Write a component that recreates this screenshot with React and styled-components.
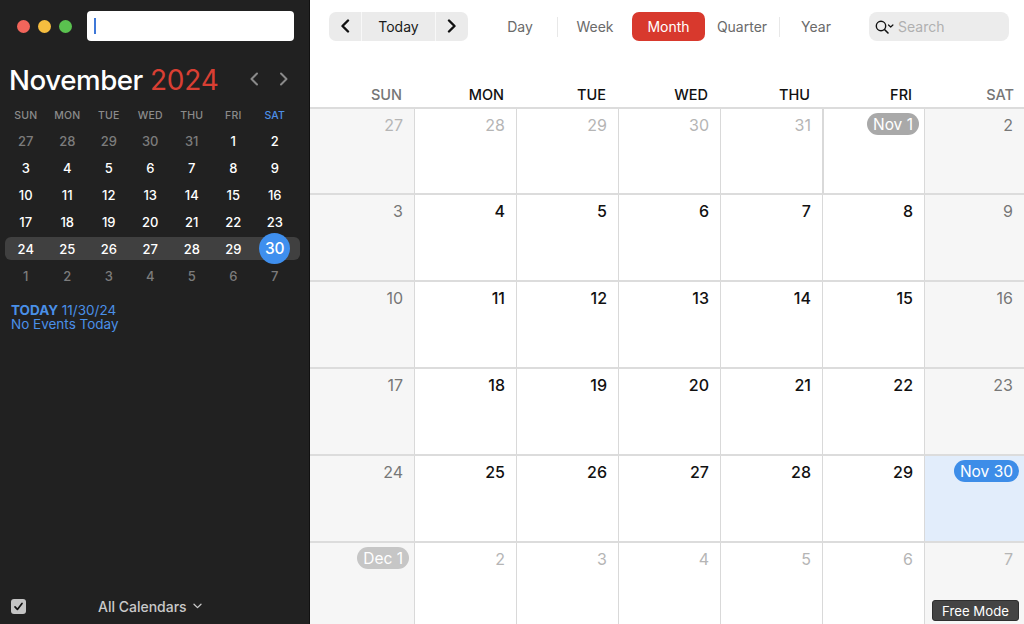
import React from 'react'
import styled, { createGlobalStyle } from 'styled-components'

const Global = createGlobalStyle`
  html, body { margin: 0; padding: 0; background: #fff; }
  body { font-family: Inter, "Liberation Sans", sans-serif; overflow: hidden; }
`

const Page = styled.div`
  display: flex;
  width: 1024px;
  height: 624px;
  overflow: hidden;
  position: relative;
`

const Sidebar = styled.aside`
  width: 310px;
  height: 624px;
  flex: none;
  background: #212121;
  display: flex;
  flex-direction: column;
  box-sizing: border-box;
  border-right: 1px solid #111;
`

const TitleBar = styled.div`
  display: flex;
  align-items: center;
  height: 30px;
  margin-top: 11px;
  padding-left: 17px;
`

const Light = styled.span`
  width: 13px;
  height: 13px;
  border-radius: 50%;
  margin-right: 8px;
  background: ${p => p.$color};
`

const SearchField = styled.div`
  width: 207px;
  height: 30px;
  margin-left: 7px;
  background: #fff;
  border-radius: 4px;
  display: flex;
  align-items: center;
  padding-left: 7px;
  box-sizing: border-box;
`

const Caret = styled.span`
  width: 2px;
  height: 16px;
  background: #3f78d8;
`

const MonthRow = styled.div`
  display: flex;
  align-items: center;
  height: 36px;
  margin-top: 21px;
  padding-left: 9px;
`

const MonthName = styled.span`
  font-size: 27.7px;
  font-weight: 500;
  letter-spacing: -0.45px;
  color: #fff;
`

const YearName = styled.span`
  font-size: 28px;
  font-weight: 400;
  letter-spacing: -0.2px;
  color: #d93f33;
  margin-left: 7px;
`

const MonthNav = styled.div`
  display: flex;
  gap: 20px;
  margin-left: 30px;
  margin-bottom: 2px;
`

const MiniGrid = styled.div`
  display: grid;
  grid-template-columns: repeat(7, 41.5px);
  grid-template-rows: 25px repeat(6, 27px);
  margin: 4px 0 0 5px;
  position: relative;
`

const MiniHead = styled.div`
  display: flex;
  align-items: center;
  justify-content: center;
  padding-top: 2px;
  font-size: 10.5px;
  font-weight: 500;
  letter-spacing: 0.2px;
  color: ${p => (p.$blue ? '#4d8fe6' : '#8b8b8b')};
`

const MiniDay = styled.div`
  display: flex;
  align-items: center;
  justify-content: center;
  font-size: 13px;
  font-weight: 500;
  color: ${p => (p.$dim ? '#7c7c7c' : '#fff')};
  background: ${p => (p.$week ? '#404040' : 'transparent')};
  height: ${p => (p.$week ? '23px' : 'auto')};
  align-self: center;
  border-radius: ${p => (p.$first ? '6px 0 0 6px' : p.$last ? '0 6px 6px 0' : '0')};
  ${p => p.$last && 'margin-right: -4px; padding-right: 4px;'}
`

const TodayDot = styled.span`
  width: 31px;
  height: 31px;
  flex: none;
  border-radius: 50%;
  background: #3f8fee;
  display: flex;
  align-items: center;
  justify-content: center;
  font-size: 15.5px;
  font-weight: 500;
  color: #fff;
`

const TodayNote = styled.div`
  margin: 14px 0 0 11px;
  font-size: 13.5px;
  line-height: 14px;
  color: #4a90e8;
  b { font-weight: 700; }
`

const SidebarFoot = styled.div`
  margin-top: auto;
  height: 36px;
  padding-left: 11px;
  display: flex;
  align-items: center;
`

const CheckBox = styled.span`
  width: 15px;
  height: 15px;
  border-radius: 3px;
  background: #c4c4c4;
  display: flex;
  align-items: center;
  justify-content: center;
`

const CalendarsLabel = styled.span`
  margin-left: 72px;
  font-size: 14px;
  font-weight: 500;
  color: #c9c9c9;
  display: flex;
  align-items: center;
  gap: 6px;
`

const Main = styled.main`
  flex: 1;
  display: flex;
  flex-direction: column;
  min-width: 0;
`

const Toolbar = styled.div`
  height: 41px;
  padding: 12px 0 0 19px;
  display: flex;
  align-items: flex-start;
`

const NavGroup = styled.div`
  display: flex;
  height: 29px;
  background: #ebebeb;
  border-radius: 7px;
  overflow: hidden;
`

const NavButton = styled.div`
  width: ${p => (p.$wide ? '74px' : p.$sep ? '33px' : '32px')};
  display: flex;
  align-items: center;
  justify-content: center;
  font-size: 14px;
  padding-bottom: 1px;
  box-sizing: border-box;
  color: #1a1a1a;
  border-left: ${p => (p.$sep ? '1px solid #f8f8f8' : 'none')};
`

const Views = styled.div`
  display: flex;
  align-items: center;
  height: 29px;
  margin-left: 15px;
`

const ViewTab = styled.div`
  width: ${p => p.$w}px;
  height: 29px;
  display: flex;
  align-items: center;
  justify-content: center;
  font-size: 14px;
  padding-bottom: 1px;
  box-sizing: border-box;
  border-radius: 7px;
  color: ${p => (p.$active ? '#fff' : '#6a6a6a')};
  background: ${p => (p.$active ? '#d8392d' : 'transparent')};
`

const ViewSep = styled.span`
  width: 1px;
  height: 20px;
  background: #e8e8e8;
`

const SearchBox = styled.div`
  width: 140px;
  height: 29px;
  margin-left: 17px;
  background: #ececec;
  border-radius: 8px;
  display: flex;
  align-items: center;
  padding-left: 5px;
  box-sizing: border-box;
  font-size: 14px;
  color: #b0b0b0;
  gap: 4px;
`

const WeekHeader = styled.div`
  display: grid;
  grid-template-columns: 105px repeat(5, 102px) 99px;
  height: 54px;
  box-sizing: border-box;
  padding-bottom: 4px;
  align-items: flex-end;
`

const WeekName = styled.div`
  text-align: right;
  padding-right: ${p => (p.$last ? '10px' : '13px')};
  font-size: 14.5px;
  font-weight: 500;
  color: ${p => (p.$weekend ? '#767676' : '#111')};
`

const MonthGrid = styled.div`
  flex: 1;
  display: grid;
  grid-template-columns: 105px repeat(5, 102px) 99px;
  grid-template-rows: 86px 87px 87px 87px 87px 1fr;
  border-top: 2px solid #dcdcdc;
`

const Cell = styled.div`
  box-sizing: border-box;
  border-right: 1px solid #d9d9d9;
  border-bottom: 2px solid #dcdcdc;
  background: ${p => (p.$today ? '#e2edfb' : p.$weekend ? '#f6f6f6' : '#fff')};
  display: flex;
  justify-content: flex-end;
  align-items: flex-start;
  padding: ${p => (p.$badge ? '4px 5px 0 0' : '6px 11px 0 0')};
  font-size: 16px;
  color: ${p => (p.$dim ? '#b5b5b5' : p.$weekend ? '#777' : '#111')};
  font-weight: ${p => (p.$dim || p.$weekend ? 400 : 500)};
  ${p => p.$noRight && 'border-right: none;'}
  ${p => p.$noBottom && 'border-bottom: none;'}
  ${p => p.$thick && 'border-left: 1px solid #d9d9d9;'}
`

const Badge = styled.span`
  height: 22px;
  padding: 0 6px;
  border-radius: 11px;
  display: flex;
  align-items: center;
  color: #fff;
  font-size: 15.5px;
  font-weight: 400;
  background: ${p => p.$bg};
`

const FreeMode = styled.div`
  position: absolute;
  right: 5px;
  bottom: 3px;
  width: 87px;
  height: 21px;
  background: #444;
  border: 1px solid #2f2f2f;
  border-radius: 3px;
  box-sizing: border-box;
  color: #fff;
  font-size: 13.2px;
  display: flex;
  align-items: center;
  justify-content: center;
`

const Chevron = ({ dir, color, w = 2, h = 14 }) => (
  <svg width="10" height={h} viewBox="0 0 10 14" fill="none">
    <path
      d={dir === 'left' ? 'M8 1.5 2.5 7 8 12.5' : 'M2 1.5 7.5 7 2 12.5'}
      stroke={color}
      strokeWidth={w}
      strokeLinecap="round"
      strokeLinejoin="round"
    />
  </svg>
)

const miniRows = [
  [27, 28, 29, 30, 31, 1, 2],
  [3, 4, 5, 6, 7, 8, 9],
  [10, 11, 12, 13, 14, 15, 16],
  [17, 18, 19, 20, 21, 22, 23],
  [24, 25, 26, 27, 28, 29, 30],
  [1, 2, 3, 4, 5, 6, 7],
]
const weekNames = ['SUN', 'MON', 'TUE', 'WED', 'THU', 'FRI', 'SAT']

const isDim = (r, c) => (r === 0 && c < 5) || r === 5

const badgeFor = (r, c) => {
  if (r === 0 && c === 5) return { text: 'Nov 1', bg: '#a9a9a9' }
  if (r === 4 && c === 6) return { text: 'Nov 30', bg: '#3d8de8' }
  if (r === 5 && c === 0) return { text: 'Dec 1', bg: '#c6c6c6' }
  return null
}

export default function App() {
  return (
    <Page>
      <Global />
      <Sidebar>
        <TitleBar>
          <Light $color="#f2655b" />
          <Light $color="#f6bd3f" />
          <Light $color="#5ac24f" />
          <SearchField><Caret /></SearchField>
        </TitleBar>
        <MonthRow>
          <MonthName>November</MonthName>
          <YearName>2024</YearName>
          <MonthNav>
            <Chevron dir="left" color="#8a8a8a" />
            <Chevron dir="right" color="#8a8a8a" />
          </MonthNav>
        </MonthRow>
        <MiniGrid>
          {weekNames.map((d, i) => <MiniHead key={d} $blue={i === 6}>{d}</MiniHead>)}
          {miniRows.map((row, r) =>
            row.map((d, c) => (
              <MiniDay
                key={`${r}-${c}`}
                $dim={isDim(r, c)}
                $week={r === 4}
                $first={r === 4 && c === 0}
                $last={r === 4 && c === 6}
              >
                {r === 4 && c === 6 ? <TodayDot>{d}</TodayDot> : d}
              </MiniDay>
            ))
          )}
        </MiniGrid>
        <TodayNote>
          <div><b>TODAY</b> 11/30/24</div>
          <div>No Events Today</div>
        </TodayNote>
        <SidebarFoot>
          <CheckBox>
            <svg width="11" height="11" viewBox="0 0 11 11" fill="none">
              <path d="M2 5.8 4.4 8.4 9 2.4" stroke="#111" strokeWidth="1.7" strokeLinecap="round" strokeLinejoin="round" />
            </svg>
          </CheckBox>
          <CalendarsLabel>
            All Calendars
            <svg width="9" height="6" viewBox="0 0 9 6" fill="none">
              <path d="M1 1.2 4.5 4.6 8 1.2" stroke="#c9c9c9" strokeWidth="1.3" strokeLinecap="round" strokeLinejoin="round" />
            </svg>
          </CalendarsLabel>
        </SidebarFoot>
      </Sidebar>
      <Main>
        <Toolbar>
          <NavGroup>
            <NavButton><Chevron dir="left" color="#111" w={2.4} /></NavButton>
            <NavButton $wide $sep>Today</NavButton>
            <NavButton $sep><Chevron dir="right" color="#111" w={2.4} /></NavButton>
          </NavGroup>
          <Views>
            <ViewTab $w={74}>Day</ViewTab>
            <ViewSep />
            <ViewTab $w={74}>Week</ViewTab>
            <ViewTab $w={73} $active>Month</ViewTab>
            <ViewTab $w={74}>Quarter</ViewTab>
            <ViewSep />
            <ViewTab $w={72}>Year</ViewTab>
          </Views>
          <SearchBox>
            <svg width="20" height="16" viewBox="0 0 20 16" fill="none">
              <circle cx="7" cy="7" r="4.7" stroke="#111" strokeWidth="1.4" />
              <path d="M10.5 10.5 14 14" stroke="#111" strokeWidth="1.6" strokeLinecap="round" />
              <path d="M14.5 6 16.7 8 18.9 6" stroke="#111" strokeWidth="1.2" strokeLinecap="round" strokeLinejoin="round" />
            </svg>
            Search
          </SearchBox>
        </Toolbar>
        <WeekHeader>
          {weekNames.map((d, i) => (
            <WeekName key={d} $weekend={i === 0 || i === 6} $last={i === 6}>{d}</WeekName>
          ))}
        </WeekHeader>
        <MonthGrid>
          {miniRows.map((row, r) =>
            row.map((d, c) => {
              const badge = badgeFor(r, c)
              return (
                <Cell
                  key={`${r}-${c}`}
                  $weekend={c === 0 || c === 6}
                  $dim={isDim(r, c)}
                  $today={r === 4 && c === 6}
                  $badge={!!badge}
                  $noRight={c === 6}
                  $noBottom={r === 5}
                  $thick={r === 0 && c === 5}
                >
                  {badge ? <Badge $bg={badge.bg}>{badge.text}</Badge> : d}
                </Cell>
              )
            })
          )}
        </MonthGrid>
      </Main>
      <FreeMode>Free Mode</FreeMode>
    </Page>
  )
}
